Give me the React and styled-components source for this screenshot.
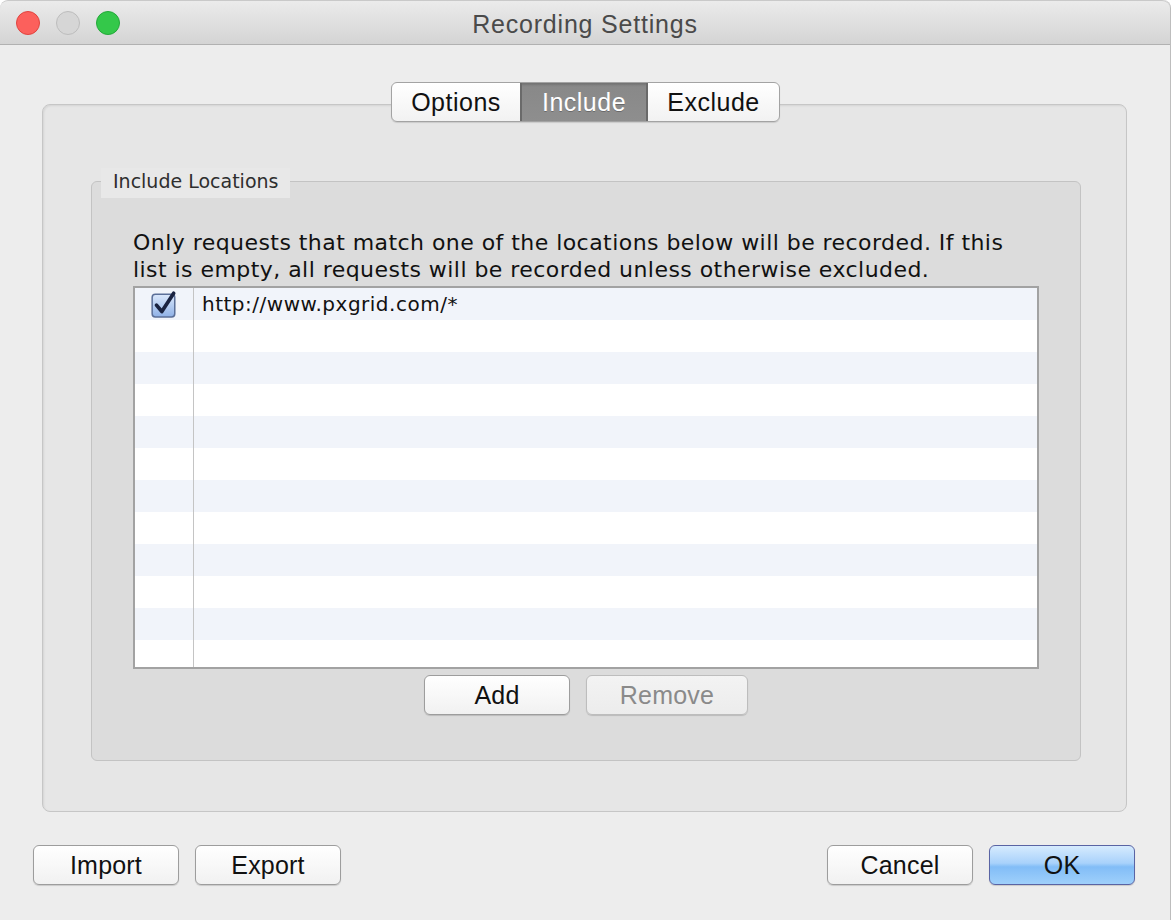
import React from 'react';
import styled, { createGlobalStyle } from 'styled-components';

const Global = createGlobalStyle`
  html, body { margin: 0; padding: 0; background: #ffffff; }
  body { font-family: "Liberation Sans", Arial, sans-serif; }
  * { box-sizing: border-box; }
`;

const Window = styled.div`
  width: 1171px;
  height: 920px;
  background: #ededed;
  border-right: 1px solid #bdbdbd;
  border-top-left-radius: 8px;
  border-top-right-radius: 8px;
  overflow: hidden;
  display: flex;
  flex-direction: column;
`;

const TitleBar = styled.div`
  height: 45px;
  flex: none;
  display: grid;
  grid-template-columns: 1fr auto 1fr;
  align-items: center;
  padding: 0 16px;
  background: linear-gradient(#ebebeb, #d4d4d4);
  border-top: 1px solid #c9c9c9;
  border-bottom: 1px solid #b1b1b1;
  border-top-left-radius: 8px;
  border-top-right-radius: 8px;
`;

const Lights = styled.div`
  display: flex;
  gap: 16px;
`;

const Light = styled.span`
  width: 24px;
  height: 24px;
  border-radius: 50%;
  background: ${({ $c }) => $c};
  border: 1px solid ${({ $b }) => $b};
`;

const Title = styled.div`
  font-size: 25px;
  letter-spacing: 0.8px;
  color: #4a4a4a;
  padding-top: 3px;
`;

const Body = styled.div`
  display: flex;
  flex-direction: column;
  padding: 37px 43px 0 42px;
`;

const Tabs = styled.div`
  position: relative;
  z-index: 1;
  align-self: center;
  display: flex;
  margin-left: 2px;
  border: 1px solid #a3a3a3;
  border-radius: 6px;
  background: linear-gradient(#ffffff, #f2f2f2);
  box-shadow: 0 1px 1px rgba(0, 0, 0, 0.12);
  overflow: hidden;
`;

const Tab = styled.div`
  width: ${({ $w }) => $w}px;
  height: 38px;
  display: flex;
  align-items: center;
  justify-content: center;
  font-size: 25px;
  letter-spacing: 0.5px;
  color: ${({ $on }) => ($on ? '#ffffff' : '#111111')};
  background: ${({ $on }) => ($on ? 'linear-gradient(#888888, #8e8e8e)' : 'transparent')};
  box-shadow: ${({ $on }) => ($on ? 'inset 2px 0 0 #6a6a6a, inset -2px 0 0 #6a6a6a, inset 0 2px 2px rgba(0,0,0,0.15)' : 'none')};
  text-shadow: ${({ $on }) => ($on ? '0 1px 0 rgba(0,0,0,0.25)' : 'none')};
`;

const Panel = styled.div`
  margin-top: -18px;
  height: 708px;
  background: #e6e6e6;
  border: 1px solid #c6c6c6;
  border-radius: 8px;
  box-shadow: inset 1px 1px 2px rgba(0, 0, 0, 0.08);
  padding: 76px 45px 0 48px;
`;

const Group = styled.div`
  height: 580px;
  background: #dcdcdc;
  border: 1px solid #c3c3c3;
  border-radius: 6px;
  display: flex;
  flex-direction: column;
  padding: 0 41px 0 41px;
`;

const GroupLabel = styled.div`
  align-self: flex-start;
  margin: -14px 0 0 -32px;
  height: 30px;
  padding: 0 12px 5px;
  display: flex;
  align-items: center;
  background: #e8e8e8;
  font-family: "DejaVu Sans", sans-serif;
  font-size: 19px;
  color: #2e2e2e;
`;

const Description = styled.p`
  margin: 31px 0 3px 0;
  font-family: "DejaVu Sans", sans-serif;
  font-size: 22px;
  line-height: 27px;
  letter-spacing: 0.45px;
  color: #111111;
`;

const Table = styled.div`
  height: 383px;
  border: 2px solid #a2a2a2;
  background: #ffffff;
  overflow: hidden;
  display: flex;
  flex-direction: column;
`;

const Row = styled.div`
  flex: none;
  height: 32px;
  display: grid;
  grid-template-columns: 59px 1fr;
  background: ${({ $alt }) => ($alt ? '#f1f4fa' : '#ffffff')};
`;

const CheckCell = styled.div`
  display: flex;
  align-items: center;
  justify-content: center;
  border-right: 1px solid #c4c4c4;
`;

const TextCell = styled.div`
  display: flex;
  align-items: center;
  padding-left: 8px;
  font-family: "DejaVu Sans", sans-serif;
  font-size: 20px;
  letter-spacing: 0.5px;
  color: #111111;
`;

const ButtonRow = styled.div`
  display: flex;
  justify-content: center;
  gap: 16px;
  margin-top: 6px;
`;

const Button = styled.button`
  width: ${({ $w }) => $w || 146}px;
  height: 40px;
  border-radius: 6px;
  border: 1px solid ${({ $primary, $disabled }) => ($primary ? '#5a64a4' : $disabled ? '#bdbdbd' : '#9d9d9d')};
  background: ${({ $primary, $disabled }) =>
    $primary
      ? 'linear-gradient(#d6ebfe 0%, #a9d2fb 45%, #82bdf7 55%, #9fd0fb 100%)'
      : $disabled
      ? 'linear-gradient(#f3f3f3, #ececec)'
      : 'linear-gradient(#ffffff, #f1f1f1)'};
  box-shadow: 0 1px 1px rgba(0, 0, 0, 0.15);
  font-family: "Liberation Sans", Arial, sans-serif;
  font-size: 25px;
  letter-spacing: 0.2px;
  color: ${({ $disabled }) => ($disabled ? '#8a8a8a' : '#111111')};
  padding: 0;
`;

const Footer = styled.div`
  display: flex;
  align-items: center;
  padding: 33px 35px 0 33px;
  gap: 16px;
`;

const Spacer = styled.div`
  flex: 1;
`;

const CheckBox = () => (
  <svg width="28" height="28" viewBox="0 0 26 26">
    <defs>
      <linearGradient id="cb" x1="0" y1="0" x2="0" y2="1">
        <stop offset="0" stopColor="#dbe8fb" />
        <stop offset="1" stopColor="#8fb1e6" />
      </linearGradient>
    </defs>
    <rect x="2" y="4" width="21" height="21" rx="3" fill="url(#cb)" stroke="#5b6f98" strokeWidth="1.4" />
    <path d="M6 14 L11 20 L22 3" fill="none" stroke="#1a2340" strokeWidth="3.4" strokeLinecap="round" strokeLinejoin="round" />
  </svg>
);

const rows = Array.from({ length: 12 }, (_, i) => i);

const App = () => (
  <>
    <Global />
    <Window>
      <TitleBar>
        <Lights>
          <Light $c="#fc605c" $b="#e0443f" />
          <Light $c="#d6d6d6" $b="#bdbdbd" />
          <Light $c="#34c84a" $b="#24a83a" />
        </Lights>
        <Title>Recording Settings</Title>
        <div />
      </TitleBar>
      <Body>
        <Tabs>
          <Tab $w={128}>Options</Tab>
          <Tab $w={128} $on>Include</Tab>
          <Tab $w={131}>Exclude</Tab>
        </Tabs>
        <Panel>
          <Group>
            <GroupLabel>Include Locations</GroupLabel>
            <Description>
              Only requests that match one of the locations below will be recorded. If this list is empty, all
              requests will be recorded unless otherwise excluded.
            </Description>
            <Table>
              {rows.map((i) => (
                <Row key={i} $alt={i % 2 === 0}>
                  <CheckCell>{i === 0 && <CheckBox />}</CheckCell>
                  <TextCell>{i === 0 ? 'http://www.pxgrid.com/*' : ''}</TextCell>
                </Row>
              ))}
            </Table>
            <ButtonRow>
              <Button $w={146}>Add</Button>
              <Button $w={162} $disabled>Remove</Button>
            </ButtonRow>
          </Group>
        </Panel>
      </Body>
      <Footer>
        <Button>Import</Button>
        <Button>Export</Button>
        <Spacer />
        <Button>Cancel</Button>
        <Button $primary>OK</Button>
      </Footer>
    </Window>
  </>
);

export default App;
